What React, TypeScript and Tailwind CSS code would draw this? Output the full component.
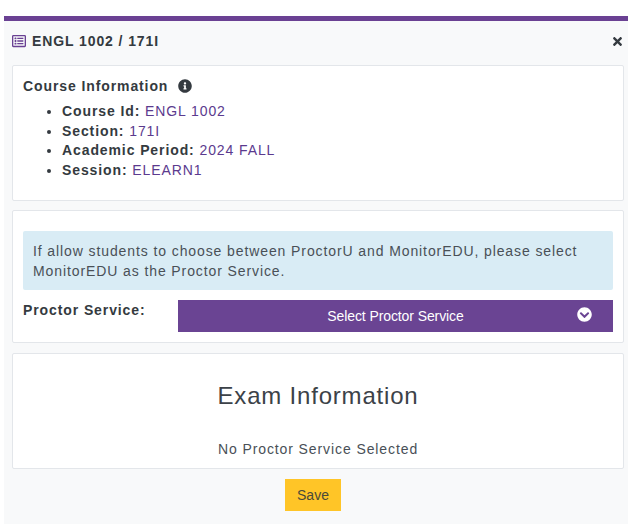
import { FaChevronCircleDown, FaInfoCircle, FaRegListAlt, FaTimes } from "react-icons/fa";

const courseDetails = [
  { label: "Course Id:", value: "ENGL 1002" },
  { label: "Section:", value: "171I" },
  { label: "Academic Period:", value: "2024 FALL" },
  { label: "Session:", value: "ELEARN1" },
];

const App = () => {
  return (
    <div className="h-[524px] bg-white pl-1 pt-4 font-['Liberation_Sans',Arial,sans-serif] text-sm tracking-[0.9px] text-[#343a40]">
      <div className="flex h-[508px] w-[624px] flex-col border-t-[5px] border-[#6a4193] bg-[#f8f9fa] pl-2 pr-1">
        <div className="flex h-[44px] shrink-0 items-center justify-between pb-1">
          <div className="flex items-center gap-[6px] font-bold leading-none">
            <FaRegListAlt size={14} className="text-[#6a4193]" />
            <span>ENGL 1002 / 171I</span>
          </div>
          <FaTimes size={13} />
        </div>

        <div className="flex h-[136px] shrink-0 flex-col rounded-[2px] border border-[#e3e6ea] bg-white px-[10px] pt-[11px]">
          <div className="flex h-[18px] items-center gap-[10px] font-bold">
            <span>Course Information</span>
            <FaInfoCircle size={14} />
          </div>
          <ul className="mt-[7px] list-disc pl-[39px] leading-[19.6px]">
            {courseDetails.map((item) => (
              <li key={item.label}>
                <span className="font-bold">{item.label}</span>{" "}
                <span className="text-[#5b3a8e]">{item.value}</span>
              </li>
            ))}
          </ul>
        </div>

        <div className="mt-[9px] flex h-[133px] shrink-0 flex-col rounded-[2px] border border-[#e3e6ea] bg-white px-[10px] pt-[20px]">
          <div className="flex h-[59px] shrink-0 items-center rounded-[2px] bg-[#d9ecf5] px-[10px] leading-[20px] text-[#495057]">
            <p>If allow students to choose between ProctorU and MonitorEDU, please select MonitorEDU as the Proctor Service.</p>
          </div>
          <div className="mt-[10px] flex">
            <label className="w-[155px] shrink-0 pt-[1px] font-bold leading-[18px]">Proctor Service:</label>
            <button className="relative flex h-[32px] flex-1 items-center justify-center bg-[#6a4493] tracking-[-0.1px] text-white">
              Select Proctor Service
              <FaChevronCircleDown size={15} className="absolute right-[21px] top-[7px]" />
            </button>
          </div>
        </div>

        <div className="mt-[10px] flex h-[116px] shrink-0 flex-col items-center rounded-[2px] border border-[#e3e6ea] bg-white">
          <h2 className="mt-[27px] text-2xl leading-[30px] tracking-[0.8px] text-[#3c4248]">Exam Information</h2>
          <p className="mt-[28px] leading-[20px] text-[#495057]">No Proctor Service Selected</p>
        </div>

        <div className="mt-[10px] flex">
          <button className="ml-[273px] h-[32px] w-[56px] bg-[#ffc527] tracking-normal text-[#4a4a3a]">Save</button>
        </div>
      </div>
    </div>
  );
};

export default App;
